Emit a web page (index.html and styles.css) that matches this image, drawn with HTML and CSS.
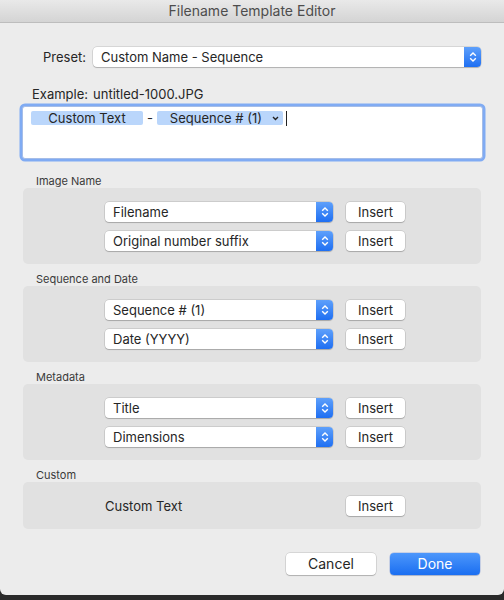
FILE: index.html
```html
<!DOCTYPE html>
<html>
<head>
<meta charset="utf-8">
<link rel="stylesheet" href="styles.css">
</head>
<body>
<div class="window">
  <div class="titlebar">Filename Template Editor</div>
  <div class="content">
    <div class="preset-row">
      <span class="preset-label">Preset:</span>
      <div class="select select-wide">
        <span class="select-text">Custom Name - Sequence</span>
        <span class="stepper"><svg width="8" height="12" viewBox="0 0 8 12"><polyline points="1.2,4.8 4,2 6.8,4.8" fill="none" stroke="#fff" stroke-width="1.4"/><polyline points="1.2,7.2 4,10 6.8,7.2" fill="none" stroke="#fff" stroke-width="1.4"/></svg></span>
      </div>
    </div>
    <div class="example"><span>Example:</span><span>untitled-1000.JPG</span></div>
    <div class="template-box">
      <div class="token-line">
        <span class="token token-a">Custom Text</span>
        <span class="dash">-</span>
        <span class="token token-b">Sequence # (1)<svg class="token-chev" width="7" height="5" viewBox="0 0 7 5"><polyline points="1,1 3.5,3.5 6,1" fill="none" stroke="#222" stroke-width="1.4"/></svg></span>
        <span class="caret"></span>
      </div>
    </div>

    <div class="group group-first">
      <div class="group-label">Image Name</div>
      <div class="group-box">
        <div class="row">
          <div class="select"><span class="select-text">Filename</span><span class="stepper"><svg width="8" height="12" viewBox="0 0 8 12"><polyline points="1.2,4.8 4,2 6.8,4.8" fill="none" stroke="#fff" stroke-width="1.4"/><polyline points="1.2,7.2 4,10 6.8,7.2" fill="none" stroke="#fff" stroke-width="1.4"/></svg></span></div>
          <div class="btn">Insert</div>
        </div>
        <div class="row">
          <div class="select"><span class="select-text">Original number suffix</span><span class="stepper"><svg width="8" height="12" viewBox="0 0 8 12"><polyline points="1.2,4.8 4,2 6.8,4.8" fill="none" stroke="#fff" stroke-width="1.4"/><polyline points="1.2,7.2 4,10 6.8,7.2" fill="none" stroke="#fff" stroke-width="1.4"/></svg></span></div>
          <div class="btn">Insert</div>
        </div>
      </div>
    </div>

    <div class="group">
      <div class="group-label">Sequence and Date</div>
      <div class="group-box">
        <div class="row">
          <div class="select"><span class="select-text">Sequence # (1)</span><span class="stepper"><svg width="8" height="12" viewBox="0 0 8 12"><polyline points="1.2,4.8 4,2 6.8,4.8" fill="none" stroke="#fff" stroke-width="1.4"/><polyline points="1.2,7.2 4,10 6.8,7.2" fill="none" stroke="#fff" stroke-width="1.4"/></svg></span></div>
          <div class="btn">Insert</div>
        </div>
        <div class="row">
          <div class="select"><span class="select-text">Date (YYYY)</span><span class="stepper"><svg width="8" height="12" viewBox="0 0 8 12"><polyline points="1.2,4.8 4,2 6.8,4.8" fill="none" stroke="#fff" stroke-width="1.4"/><polyline points="1.2,7.2 4,10 6.8,7.2" fill="none" stroke="#fff" stroke-width="1.4"/></svg></span></div>
          <div class="btn">Insert</div>
        </div>
      </div>
    </div>

    <div class="group">
      <div class="group-label">Metadata</div>
      <div class="group-box">
        <div class="row">
          <div class="select"><span class="select-text">Title</span><span class="stepper"><svg width="8" height="12" viewBox="0 0 8 12"><polyline points="1.2,4.8 4,2 6.8,4.8" fill="none" stroke="#fff" stroke-width="1.4"/><polyline points="1.2,7.2 4,10 6.8,7.2" fill="none" stroke="#fff" stroke-width="1.4"/></svg></span></div>
          <div class="btn">Insert</div>
        </div>
        <div class="row">
          <div class="select"><span class="select-text">Dimensions</span><span class="stepper"><svg width="8" height="12" viewBox="0 0 8 12"><polyline points="1.2,4.8 4,2 6.8,4.8" fill="none" stroke="#fff" stroke-width="1.4"/><polyline points="1.2,7.2 4,10 6.8,7.2" fill="none" stroke="#fff" stroke-width="1.4"/></svg></span></div>
          <div class="btn">Insert</div>
        </div>
      </div>
    </div>

    <div class="group">
      <div class="group-label">Custom</div>
      <div class="group-box">
        <div class="row">
          <div class="custom-text">Custom Text</div>
          <div class="btn">Insert</div>
        </div>
      </div>
    </div>

    <div class="actions">
      <div class="btn btn-lg">Cancel</div>
      <div class="btn btn-lg btn-primary">Done</div>
    </div>
  </div>
</div>
</body>
</html>
```

FILE: styles.css
```css
* { box-sizing: border-box; }
html, body { margin: 0; padding: 0; }
body {
  background: #2a2a2a;
  font-family: "Inter", "Liberation Sans", sans-serif;
  font-size: 13px;
  color: #262626;
  width: 504px;
  height: 600px;
  overflow: hidden;
}
.window {
  width: 504px;
  height: 595px;
  background: #ececec;
  border-radius: 0 0 6px 6px;
  overflow: hidden;
}
.titlebar {
  height: 23px;
  background: linear-gradient(#e9e9e9, #d4d4d4);
  border-bottom: 1px solid #bdbdbd;
  text-align: center;
  line-height: 22px;
  font-size: 14px;
  color: #4d4d4d;
}
.content {
  padding: 24px 23px 0 23px;
}
.preset-row {
  display: flex;
  align-items: center;
  height: 20px;
}
.preset-label {
  width: 63px;
  text-align: right;
  margin-right: 7px;
}
.select {
  position: relative;
  display: flex;
  align-items: center;
  height: 20px;
  width: 228px;
  background: #fff;
  border-radius: 4px;
  box-shadow: 0 0 0 0.5px rgba(0,0,0,0.18), 0 1px 1px rgba(0,0,0,0.18);
}
.select-wide { flex: 1; }
.select-text {
  flex: 1;
  padding-left: 8px;
  white-space: nowrap;
}
.stepper {
  width: 17px;
  height: 20px;
  background: linear-gradient(#5ea0fb, #1f6ff2);
  border-radius: 0 4px 4px 0;
  display: flex;
  align-items: center;
  justify-content: center;
}
.example {
  display: flex;
  gap: 5px;
  margin: 20px 0 0 9px;
  line-height: 14px;
}
.template-box {
  margin: 5px 0 0 -1px;
  width: 461px;
  height: 53px;
  background: #fff;
  border: 1px solid #a5bde8;
  border-radius: 3px;
  box-shadow: 0 0 0 2.5px #80abf3;
  padding: 4px 0 0 8px;
}
.token-line {
  display: flex;
  align-items: center;
  height: 14px;
}
.token {
  height: 14px;
  line-height: 14px;
  background: #bad6fb;
  border-radius: 2px;
  text-align: center;
  white-space: nowrap;
}
.token-a { width: 112px; }
.token-b {
  width: 126px;
  display: flex;
  align-items: center;
  justify-content: flex-end;
  padding-right: 4px;
}
.token-chev { margin-left: 10px; }
.dash {
  width: 14px;
  text-align: center;
}
.caret {
  width: 1px;
  height: 15px;
  background: #222;
  margin-left: 3px;
}
.group { margin-top: 9px; }
.group-first { margin-top: 16px; }
.group-label {
  font-size: 11px;
  line-height: 13px;
  color: #3a3a3a;
  padding-left: 13px;
}
.group-box {
  background: #e1e1e1;
  border-radius: 5px;
  width: 458px;
  padding: 14px 0 13px 82px;
  display: flex;
  flex-direction: column;
  gap: 9px;
}
.row {
  display: flex;
  align-items: center;
  gap: 13px;
  height: 20px;
}
.btn {
  width: 59px;
  height: 20px;
  background: #fff;
  border-radius: 4px;
  box-shadow: 0 0 0 0.5px rgba(0,0,0,0.18), 0 1px 1px rgba(0,0,0,0.18);
  text-align: center;
  line-height: 20px;
}
.custom-text {
  width: 228px;
  padding-left: 0;
}
.actions {
  display: flex;
  justify-content: flex-end;
  gap: 14px;
  margin-top: 24px;
  padding-right: 1px;
}
.btn-lg {
  width: 90px;
  height: 22px;
  line-height: 22px;
  font-size: 14px;
}
.btn-primary {
  background: linear-gradient(#4d97fb, #1a6ef1);
  color: #fff;
  box-shadow: 0 0 0 0.5px rgba(0,60,200,0.3), 0 1px 1px rgba(0,0,0,0.15);
}
```
